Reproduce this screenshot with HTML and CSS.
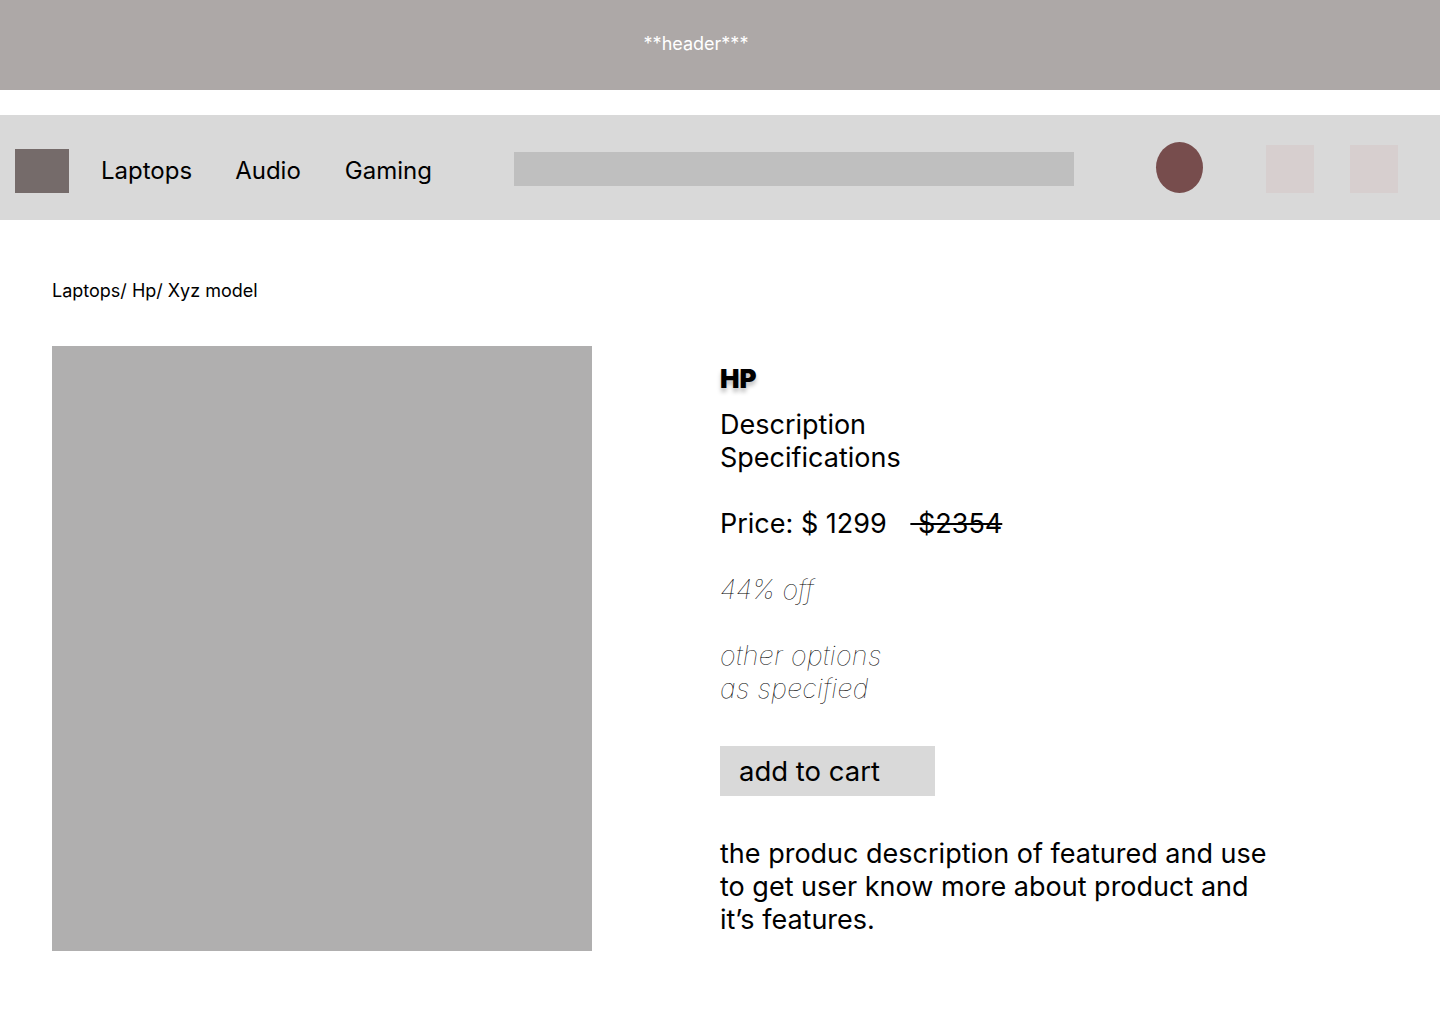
FILE: index.html
```html
<!DOCTYPE html>
<html lang="en">
<head>
<meta charset="utf-8">
<title>Product</title>
<link rel="stylesheet" href="styles.css">
</head>
<body>
<header class="top">**header***</header>
<nav class="nav">
  <div class="logo"></div>
  <a class="link link-laptops">Laptops</a>
  <a class="link link-audio">Audio</a>
  <a class="link link-gaming">Gaming</a>
  <div class="search"></div>
  <div class="avatar"></div>
  <div class="icon icon-a"></div>
  <div class="icon icon-b"></div>
</nav>
<main class="main">
  <div class="crumbs">Laptops/ Hp/ Xyz model</div>
  <section class="product">
    <div class="photo"></div>
    <div class="info">
      <h1 class="brand">HP</h1>
      <div class="tabs">
        <div>Description</div>
        <div>Specifications</div>
      </div>
      <div class="price">Price: $ 1299 <s class="old">&nbsp;$2354</s></div>
      <div class="off">44% off</div>
      <div class="options">
        <div>other options</div>
        <div>as specified</div>
      </div>
      <button class="cart">add to cart</button>
      <p class="desc">the produc description of featured and use<br>to get user know more about product and<br>it’s features.</p>
    </div>
  </section>
</main>
</body>
</html>
```
FILE: styles.css
```css
* { box-sizing: border-box; }
body {
  margin: 0;
  font-family: Inter, "Noto Sans", sans-serif;
  color: #000;
  background: #fff;
}
.top {
  height: 90px;
  background: #ada8a7;
  color: #fff;
  font-size: 18px;
  display: flex;
  align-items: center;
  justify-content: center;
  padding-right: 48px;
  padding-bottom: 4px;
}
.nav {
  margin-top: 25px;
  height: 105px;
  background: #d9d9d9;
  display: flex;
  align-items: center;
}
.logo {
  width: 54px;
  height: 44px;
  background: #756b6a;
  margin-left: 15px;
  margin-top: 7px;
}
.link {
  font-size: 24px;
  margin-top: 5px;
}
.link-laptops { margin-left: 32px; }
.link-audio { margin-left: 43px; }
.link-gaming { margin-left: 44px; }
.search {
  width: 560px;
  height: 34px;
  background: #bfbfbf;
  margin-left: 82px;
  margin-top: 3px;
}
.avatar {
  width: 47px;
  height: 51px;
  border-radius: 50%;
  background: #774d4d;
  margin-left: 82px;
}
.icon {
  width: 48px;
  height: 48px;
  background: #d7cfcf;
  margin-top: 3px;
}
.icon-a { margin-left: 63px; }
.icon-b { margin-left: 36px; }
.main {
  padding: 61px 0 0 52px;
}
.crumbs {
  font-size: 18px;
  line-height: 20px;
}
.product {
  display: flex;
  margin-top: 45px;
}
.photo {
  width: 540px;
  height: 605px;
  background: #b0afaf;
  flex: none;
}
.info {
  margin-left: 128px;
  padding-top: 18px;
}
.brand {
  margin: 0;
  font-size: 26px;
  line-height: 29px;
  font-weight: 900;
  letter-spacing: 0;
  text-shadow: 0 4px 4px rgba(0, 0, 0, 0.25);
}
.tabs {
  margin-top: 15px;
  font-size: 27px;
  line-height: 33px;
}
.price {
  margin-top: 33px;
  font-size: 27px;
  line-height: 33px;
}
.old {
  margin-left: 16px;
  text-decoration: line-through;
  text-decoration-thickness: 2px;
}
.off {
  margin-top: 33px;
  font-size: 27px;
  line-height: 33px;
  font-style: italic;
  font-weight: 100;
  color: #000;
  font-variant-ligatures: none;
}
.options {
  margin-top: 33px;
  font-size: 27px;
  line-height: 33px;
  font-style: italic;
  font-weight: 100;
  color: #000;
  letter-spacing: 0.3px;
}
.cart {
  display: block;
  margin-top: 41px;
  width: 215px;
  height: 50px;
  border: none;
  background: #d9d9d9;
  font-family: inherit;
  font-size: 27.5px;
  color: #000;
  text-align: left;
  padding: 0 0 0 19px;
}
.desc {
  margin: 41px 0 0;
  font-size: 27px;
  line-height: 33px;
}
```
